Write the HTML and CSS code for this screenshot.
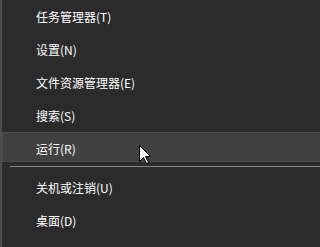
FILE: index.html
```html
<!DOCTYPE html>
<html lang="zh-CN">
<head>
<meta charset="utf-8">
<link rel="stylesheet" href="styles.css">
</head>
<body>
<div class="menu">
  <div class="item">任务管理器(T)</div>
  <div class="item">设置(N)</div>
  <div class="item">文件资源管理器(E)</div>
  <div class="item">搜索(S)</div>
  <div class="item hover">运行(R)</div>
  <div class="sep"><div class="line"></div></div>
  <div class="item">关机或注销(U)</div>
  <div class="item">桌面(D)</div>
  <svg class="cursor" width="13" height="20" viewBox="0 0 13 20">
    <path d="M0.5 0.5 L0.5 16.5 L4.5 12.5 L7.5 18.5 L9.5 17.5 L6.5 11.5 L11.5 11.5 Z" fill="#fff" stroke="#000" stroke-width="1"/>
  </svg>
</div>
</body>
</html>
```
FILE: styles.css
```css
html, body {
  margin: 0;
  padding: 0;
  background: #2b2b2b;
}
.menu {
  position: relative;
  min-height: 100vh;
  box-sizing: border-box;
  border-left: 2px solid #4e4e4e;
  background: #2b2b2b;
  font-family: "Noto Sans CJK SC", "Microsoft YaHei", sans-serif;
  font-size: 12px;
  color: #ffffff;
  overflow: hidden;
}
.item {
  box-sizing: border-box;
  height: 30px;
  margin-bottom: 3px;
  padding-top: 3px;
  padding-left: 34px;
  display: flex;
  align-items: center;
  white-space: nowrap;
}
.item.hover {
  background: #414141;
  border: 1px solid #4b4b4b;
  border-right: none;
  padding-left: 33px;
  padding-top: 2px;
}
.sep {
  height: 9px;
  margin-top: -3px;
  padding-top: 4px;
  box-sizing: border-box;
  padding-left: 8px;
}
.line {
  height: 1px;
  background: #858585;
}
.cursor {
  position: absolute;
  left: 137px;
  top: 145px;
}
```
